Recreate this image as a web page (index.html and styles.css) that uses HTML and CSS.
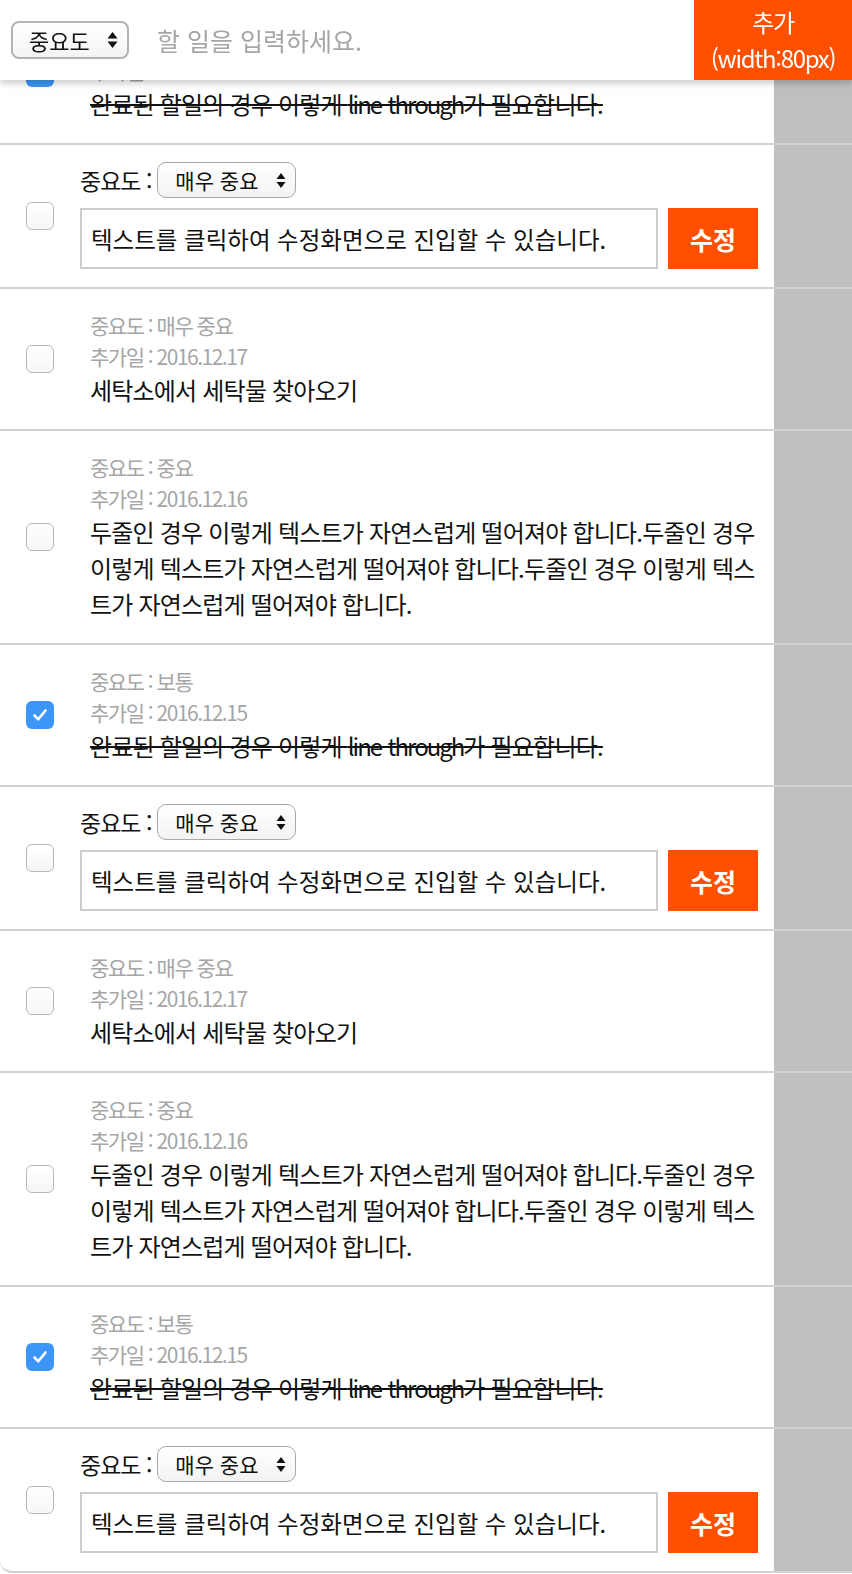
FILE: index.html
```html
<!DOCTYPE html>
<html lang="ko">
<head>
<meta charset="utf-8">
<title>할 일 목록</title>
<link rel="stylesheet" href="styles.css">
</head>
<body>
<header class="top">
  <div class="hselect"><span>중요도</span>
    <svg class="updown" width="11" height="18" viewBox="0 0 11 18"><path d="M5.5 1 L10.5 7.5 H0.5 Z M5.5 17 L10.5 10.5 H0.5 Z" fill="#111"/></svg>
  </div>
  <div class="newtodo">할 일을 입력하세요.</div>
  <button class="addbtn">추가<br>(width:80px)</button>
</header>

<main class="list">
  <div class="row">
    <div class="chk-cell"><span class="chk on"><svg width="16" height="14" viewBox="0 0 16 14"><path d="M2.5 7.5 L6.3 11.3 L13.5 2.5" fill="none" stroke="#fff" stroke-width="2.6" stroke-linecap="round" stroke-linejoin="round"/></svg></span></div>
    <div class="body">
      <div class="meta">중요도 : 보통</div>
      <div class="meta">추가일 : 2016.12.15</div>
      <div class="title done">완료된 할일의 경우 이렇게 <span class="latin">line-through</span>가 필요합니다.</div>
    </div>
    <div class="side"></div>
  </div>

  <div class="row">
    <div class="chk-cell"><span class="chk"></span></div>
    <div class="body edit">
      <div class="prio"><span class="plabel">중요도 :</span>
        <div class="pselect"><span>매우 중요</span><svg width="10" height="17" viewBox="0 0 10 17"><path d="M5 1 L9.5 7 H0.5 Z M5 16 L9.5 10 H0.5 Z" fill="#111"/></svg></div>
      </div>
      <div class="editline">
        <div class="editbox">텍스트를 클릭하여 수정화면으로 진입할 수 있습니다.</div>
        <button class="editbtn">수정</button>
      </div>
    </div>
    <div class="side"></div>
  </div>

  <div class="row">
    <div class="chk-cell"><span class="chk"></span></div>
    <div class="body">
      <div class="meta">중요도 : 매우 중요</div>
      <div class="meta">추가일 : 2016.12.17</div>
      <div class="title">세탁소에서 세탁물 찾아오기</div>
    </div>
    <div class="side"></div>
  </div>

  <div class="row">
    <div class="chk-cell"><span class="chk"></span></div>
    <div class="body">
      <div class="meta">중요도 : 중요</div>
      <div class="meta">추가일 : 2016.12.16</div>
      <div class="title">두줄인 경우 이렇게 텍스트가 자연스럽게 떨어져야 합니다.두줄인 경우 이렇게 텍스트가 자연스럽게 떨어져야 합니다.두줄인 경우 이렇게 텍스트가 자연스럽게 떨어져야 합니다.</div>
    </div>
    <div class="side"></div>
  </div>

  <div class="row">
    <div class="chk-cell"><span class="chk on"><svg width="16" height="14" viewBox="0 0 16 14"><path d="M2.5 7.5 L6.3 11.3 L13.5 2.5" fill="none" stroke="#fff" stroke-width="2.6" stroke-linecap="round" stroke-linejoin="round"/></svg></span></div>
    <div class="body">
      <div class="meta">중요도 : 보통</div>
      <div class="meta">추가일 : 2016.12.15</div>
      <div class="title done">완료된 할일의 경우 이렇게 <span class="latin">line-through</span>가 필요합니다.</div>
    </div>
    <div class="side"></div>
  </div>

  <div class="row">
    <div class="chk-cell"><span class="chk"></span></div>
    <div class="body edit">
      <div class="prio"><span class="plabel">중요도 :</span>
        <div class="pselect"><span>매우 중요</span><svg width="10" height="17" viewBox="0 0 10 17"><path d="M5 1 L9.5 7 H0.5 Z M5 16 L9.5 10 H0.5 Z" fill="#111"/></svg></div>
      </div>
      <div class="editline">
        <div class="editbox">텍스트를 클릭하여 수정화면으로 진입할 수 있습니다.</div>
        <button class="editbtn">수정</button>
      </div>
    </div>
    <div class="side"></div>
  </div>

  <div class="row">
    <div class="chk-cell"><span class="chk"></span></div>
    <div class="body">
      <div class="meta">중요도 : 매우 중요</div>
      <div class="meta">추가일 : 2016.12.17</div>
      <div class="title">세탁소에서 세탁물 찾아오기</div>
    </div>
    <div class="side"></div>
  </div>

  <div class="row">
    <div class="chk-cell"><span class="chk"></span></div>
    <div class="body">
      <div class="meta">중요도 : 중요</div>
      <div class="meta">추가일 : 2016.12.16</div>
      <div class="title">두줄인 경우 이렇게 텍스트가 자연스럽게 떨어져야 합니다.두줄인 경우 이렇게 텍스트가 자연스럽게 떨어져야 합니다.두줄인 경우 이렇게 텍스트가 자연스럽게 떨어져야 합니다.</div>
    </div>
    <div class="side"></div>
  </div>

  <div class="row">
    <div class="chk-cell"><span class="chk on"><svg width="16" height="14" viewBox="0 0 16 14"><path d="M2.5 7.5 L6.3 11.3 L13.5 2.5" fill="none" stroke="#fff" stroke-width="2.6" stroke-linecap="round" stroke-linejoin="round"/></svg></span></div>
    <div class="body">
      <div class="meta">중요도 : 보통</div>
      <div class="meta">추가일 : 2016.12.15</div>
      <div class="title done">완료된 할일의 경우 이렇게 <span class="latin">line-through</span>가 필요합니다.</div>
    </div>
    <div class="side"></div>
  </div>

  <div class="row">
    <div class="chk-cell"><span class="chk"></span></div>
    <div class="body edit">
      <div class="prio"><span class="plabel">중요도 :</span>
        <div class="pselect"><span>매우 중요</span><svg width="10" height="17" viewBox="0 0 10 17"><path d="M5 1 L9.5 7 H0.5 Z M5 16 L9.5 10 H0.5 Z" fill="#111"/></svg></div>
      </div>
      <div class="editline">
        <div class="editbox">텍스트를 클릭하여 수정화면으로 진입할 수 있습니다.</div>
        <button class="editbtn">수정</button>
      </div>
    </div>
    <div class="side"></div>
  </div>
</main>
</body>
</html>
```

FILE: styles.css
```css
* { box-sizing: border-box; }

html, body {
  margin: 0;
  padding: 0;
  background: #fff;
  font-family: "Noto Sans CJK KR", "Noto Sans", sans-serif;
  color: #111;
}

.top {
  position: fixed;
  top: 0;
  left: 0;
  right: 0;
  height: 80px;
  background: #fff;
  display: flex;
  align-items: center;
  padding-left: 11px;
  box-shadow: 0 3px 7px rgba(0, 0, 0, 0.22);
  z-index: 10;
}

.hselect {
  width: 118px;
  height: 38px;
  border: 2px solid #b3b3b3;
  border-radius: 8px;
  display: flex;
  align-items: center;
  justify-content: space-between;
  padding: 0 9px 0 16px;
  font-size: 22px;
  line-height: 1;
  background: linear-gradient(#fff, #f4f4f4);
}

.newtodo {
  flex: 1;
  margin-left: 28px;
  font-size: 25px;
  color: #a6a6a6;
}

.addbtn {
  width: 158px;
  height: 80px;
  border: 0;
  margin: 0;
  padding: 0;
  background: #ff5000;
  color: #fff;
  font-family: inherit;
  font-size: 24px;
  line-height: 36px;
  letter-spacing: -1.3px;
}

.list {
  margin-top: 3px;
}

.row {
  display: grid;
  grid-template-columns: 80px 1fr 78px;
  border-bottom: 2px solid #d2d2d2;
}

.row:last-child {
  border-bottom-left-radius: 12px;
}

.chk-cell {
  display: flex;
  align-items: center;
  padding-left: 26px;
}

.chk {
  width: 28px;
  height: 28px;
  border: 1.5px solid #b8b8b8;
  border-radius: 6px;
  background: linear-gradient(#fff, #f6f6f6);
  display: flex;
  align-items: center;
  justify-content: center;
}

.chk.on {
  border: 0;
  background: #3b96f7;
}

.body {
  padding: 21px 16px 21px 10px;
}

.meta {
  font-size: 21px;
  line-height: 31px;
  letter-spacing: -1.5px;
  color: #a6a6a6;
}

.title {
  font-size: 24px;
  line-height: 36px;
  letter-spacing: -0.8px;
  color: #111;
}

.title.done {
  text-decoration: line-through;
  text-decoration-thickness: 2px;
}

.latin {
  letter-spacing: -2px;
}

.body.edit {
  padding: 17px 16px 18px 0;
}

.prio {
  height: 36px;
  display: flex;
  align-items: center;
}

.plabel {
  font-size: 23px;
  letter-spacing: -1px;
  margin-right: 6px;
}

.pselect {
  width: 139px;
  height: 36px;
  border: 1.5px solid #a8a8a8;
  border-radius: 9px;
  display: flex;
  align-items: center;
  justify-content: space-between;
  padding: 0 9px 0 17px;
  font-size: 21px;
  background: linear-gradient(#fff, #f3f3f3);
}

.editline {
  margin-top: 10px;
  height: 61px;
  display: flex;
  gap: 10px;
}

.editbox {
  flex: 1;
  border: 2px solid #cdcdcd;
  display: flex;
  align-items: center;
  padding-left: 9px;
  font-size: 23.5px;
  color: #111;
}

.editbtn {
  width: 90px;
  border: 0;
  margin: 0;
  padding: 0;
  background: #ff5000;
  color: #fff;
  font-family: inherit;
  font-size: 25px;
  font-weight: 700;
}

.side {
  background: #bfbfbf;
}
```
